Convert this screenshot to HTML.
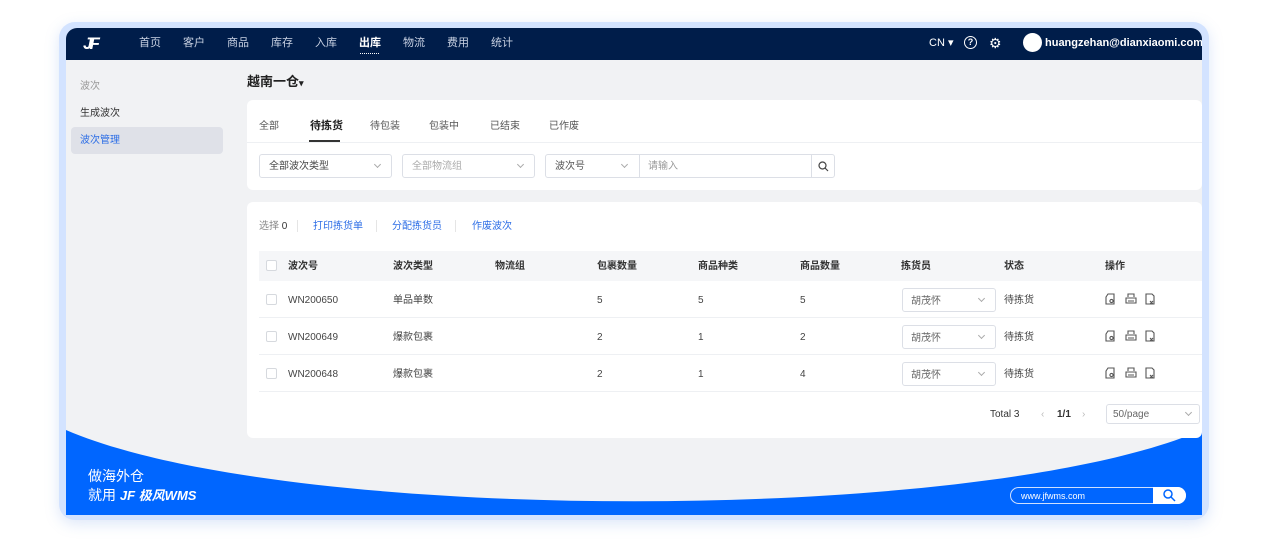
<!DOCTYPE html>
<html><head><meta charset="utf-8"><style>
*{margin:0;padding:0;box-sizing:border-box}
body{width:1266px;height:559px;background:#fff;font-family:"Liberation Sans","Noto Sans CJK SC",sans-serif;position:relative;overflow:hidden;color:#333}
.a{position:absolute;white-space:nowrap;line-height:12px}
#frame{position:absolute;left:59px;top:22px;width:1150px;height:498px;border-radius:16px;background:#d3e3ff;box-shadow:0 4px 14px rgba(120,160,230,.25)}
#inner{position:absolute;left:66px;top:28px;width:1136px;height:487px;background:#f1f2f4;border-radius:11px 11px 0 0;overflow:hidden}
#nav{position:absolute;left:0;top:0;width:1136px;height:32px;background:#001d4a}
.nl{position:absolute;top:9px;font-size:11px;color:#c9d2e3;line-height:12px}
.card{position:absolute;background:#fff;border-radius:6px}
.f{font-size:10px;color:#555}
.sel{position:absolute;border:1px solid #dcdfe6;border-radius:3px;background:#fff;height:24px}
.chev{position:absolute;width:5px;height:5px;border-right:1px solid #aaa;border-bottom:1px solid #aaa;transform:rotate(45deg)}
.cb{position:absolute;width:11px;height:11px;border:1px solid #d6d9de;border-radius:2px;background:#fff}
.th{position:absolute;top:10px;font-size:10px;color:#333;font-weight:bold;line-height:12px}
.td{position:absolute;font-size:10px;color:#444;line-height:12px;top:14px}
.row{position:absolute;left:0;width:943px;height:37px;border-bottom:1px solid #eef0f3}
</style></head><body>
<div id="frame"></div>
<div id="inner">
 <div id="nav">
  <div class="a" style="left:17px;top:7px;font-size:17px;line-height:18px;font-weight:bold;font-style:italic;color:#fff;letter-spacing:-3px">JF</div>
  <div class="nl" style="left:73px">首页</div><div class="nl" style="left:117px">客户</div><div class="nl" style="left:161px">商品</div><div class="nl" style="left:205px">库存</div><div class="nl" style="left:249px">入库</div>
  <div class="nl" style="left:293px;color:#fff;font-weight:bold">出库</div>
  <div class="a" style="left:294px;top:25px;width:19px;height:2px;border-top:1px dotted #fff"></div>
  <div class="nl" style="left:337px">物流</div><div class="nl" style="left:381px">费用</div><div class="nl" style="left:425px">统计</div>
  <div class="a" style="left:863px;top:9px;font-size:11px;color:#fff">CN ▾</div>
  <div class="a" style="left:898px;top:8px;width:13px;height:13px;border:1.5px solid #fff;border-radius:50%;color:#fff;font-size:9px;text-align:center;line-height:10px;font-weight:bold">?</div>
  <div class="a" style="left:923px;top:7px;color:#fff;font-size:14px;line-height:16px">⚙</div>
  <div class="a" style="left:957px;top:5px;width:19px;height:19px;border-radius:50%;background:#fff"></div>
  <div class="a" style="left:979px;top:9px;font-size:11px;color:#fff;font-weight:bold">huangzehan@dianxiaomi.com</div>
 </div>
 <svg class="a" style="left:0;top:0" width="1136" height="487"><path d="M0 402 C220 497 916 497 1136 402 L1136 487 L0 487Z" fill="#0066ff"/></svg>
 <div class="a" style="left:22px;top:440px;font-size:14px;line-height:16px;color:#fff">做海外仓</div>
 <div class="a" style="left:22px;top:459px;font-size:14px;line-height:16px;color:#fff">就用 <i style="font-weight:bold;font-size:13px">JF 极风WMS</i></div>
 <div class="a" style="left:944px;top:459px;width:176px;height:17px;border:1px solid #cfe0ff;border-radius:9px;background:#0066ff"></div>
 <div class="a" style="left:955px;top:462px;font-size:9px;color:#fff">www.jfwms.com</div>
 <div class="a" style="left:1087px;top:459px;width:33px;height:17px;background:#fff;border-radius:0 9px 9px 0"></div>
 <svg class="a" style="left:1097px;top:461px" width="13" height="13"><circle cx="5" cy="5" r="4" stroke="#0066ff" stroke-width="1.5" fill="none"/><path d="M8 8l4 4" stroke="#0066ff" stroke-width="1.5"/></svg>
 <div class="a" style="left:14px;top:53px;font-size:10px;color:#999">波次</div>
 <div class="a" style="left:14px;top:80px;font-size:10px;color:#333">生成波次</div>
 <div class="a" style="left:5px;top:99px;width:152px;height:27px;background:#dfe1e8;border-radius:4px"></div>
 <div class="a" style="left:14px;top:107px;font-size:10px;color:#2d6ee6">波次管理</div>
 <div class="a" style="left:181px;top:47px;font-size:13px;line-height:14px;font-weight:bold;color:#222">越南一仓<span style="font-size:9px">▾</span></div>
 <div class="card" style="left:181px;top:72px;width:955px;height:90px">
  <div class="a f" style="left:12px;top:21px">全部</div>
  <div class="a" style="left:63px;top:20px;font-size:11px;font-weight:bold;color:#222">待拣货</div>
  <div class="a" style="left:62px;top:40px;width:31px;height:2px;background:#333"></div>
  <div class="a f" style="left:123px;top:21px">待包装</div>
  <div class="a f" style="left:182px;top:21px">包装中</div>
  <div class="a f" style="left:243px;top:21px">已结束</div>
  <div class="a f" style="left:302px;top:21px">已作废</div>
  <div class="a" style="left:0;top:42px;width:955px;height:1px;background:#eef0f3"></div>
  <div class="sel" style="left:12px;top:54px;width:133px"><span class="a f" style="left:9px;top:6px;color:#444">全部波次类型</span><span class="chev" style="left:115px;top:7px"></span></div>
  <div class="sel" style="left:155px;top:54px;width:133px"><span class="a f" style="left:9px;top:6px;color:#aaa">全部物流组</span><span class="chev" style="left:115px;top:7px"></span></div>
  <div class="sel" style="left:298px;top:54px;width:290px"><span class="a f" style="left:9px;top:6px;color:#555">波次号</span><span class="chev" style="left:76px;top:7px"></span>
   <span class="a" style="left:93px;top:0;width:1px;height:22px;background:#dcdfe6"></span><span class="a f" style="left:102px;top:6px;color:#999">请输入</span>
   <span class="a" style="left:265px;top:0;width:1px;height:22px;background:#dcdfe6"></span>
   <svg class="a" style="left:272px;top:6px" width="11" height="11"><circle cx="4.5" cy="4.5" r="3.5" stroke="#444" stroke-width="1.2" fill="none"/><path d="M7 7l3 3" stroke="#444" stroke-width="1.2"/></svg></div>
 </div>
 <div class="card" style="left:181px;top:174px;width:955px;height:236px">
  <div class="a f" style="left:12px;top:19px;color:#888">选择 <span style="color:#333">0</span></div>
  <div class="a" style="left:50px;top:18px;width:1px;height:12px;background:#e5e5e5"></div>
  <div class="a f" style="left:66px;top:19px;color:#2d6ee6">打印拣货单</div>
  <div class="a" style="left:129px;top:18px;width:1px;height:12px;background:#e5e5e5"></div>
  <div class="a f" style="left:145px;top:19px;color:#2d6ee6">分配拣货员</div>
  <div class="a" style="left:208px;top:18px;width:1px;height:12px;background:#e5e5e5"></div>
  <div class="a f" style="left:225px;top:19px;color:#2d6ee6">作废波次</div>
  <div class="a" style="left:12px;top:49px;width:943px;height:30px;background:#f5f6f8">
   <div class="cb" style="left:7px;top:9px"></div>
   <div class="th" style="left:29px">波次号</div><div class="th" style="left:134px">波次类型</div><div class="th" style="left:236px">物流组</div><div class="th" style="left:338px">包裹数量</div><div class="th" style="left:439px">商品种类</div><div class="th" style="left:541px">商品数量</div><div class="th" style="left:642px">拣货员</div><div class="th" style="left:745px">状态</div><div class="th" style="left:846px">操作</div>
  </div>
  <div class="a" style="left:12px;top:79px;width:943px;height:111px">
   <div class="row" style="top:0">
    <div class="cb" style="left:7px;top:13px"></div><div class="td" style="left:29px">WN200650</div><div class="td" style="left:134px">单品单数</div><div class="td" style="left:338px">5</div><div class="td" style="left:439px">5</div><div class="td" style="left:541px">5</div>
    <div class="sel" style="left:643px;top:7px;width:94px"><span class="a f" style="left:8px;top:7px;color:#666">胡茂怀</span><span class="chev" style="left:76px;top:7px"></span></div>
    <div class="td" style="left:745px">待拣货</div>
    <svg class="a" style="left:846px;top:12px" width="60" height="13"><g fill="none" stroke="#555" stroke-width="1.1"><path d="M3 1h6v10H1V4z"/><circle cx="6.5" cy="8" r="1.6"/><path d="M23 4V1h6v3M21 5h10v5H21zM23 8h6"/><path d="M41 1h6l2 2v8h-8zM45 8l3 3M48 8l-3 3"/></g></svg>
   </div>
   <div class="row" style="top:37px">
    <div class="cb" style="left:7px;top:13px"></div><div class="td" style="left:29px">WN200649</div><div class="td" style="left:134px">爆款包裹</div><div class="td" style="left:338px">2</div><div class="td" style="left:439px">1</div><div class="td" style="left:541px">2</div>
    <div class="sel" style="left:643px;top:7px;width:94px"><span class="a f" style="left:8px;top:7px;color:#666">胡茂怀</span><span class="chev" style="left:76px;top:7px"></span></div>
    <div class="td" style="left:745px">待拣货</div>
    <svg class="a" style="left:846px;top:12px" width="60" height="13"><g fill="none" stroke="#555" stroke-width="1.1"><path d="M3 1h6v10H1V4z"/><circle cx="6.5" cy="8" r="1.6"/><path d="M23 4V1h6v3M21 5h10v5H21zM23 8h6"/><path d="M41 1h6l2 2v8h-8zM45 8l3 3M48 8l-3 3"/></g></svg>
   </div>
   <div class="row" style="top:74px">
    <div class="cb" style="left:7px;top:13px"></div><div class="td" style="left:29px">WN200648</div><div class="td" style="left:134px">爆款包裹</div><div class="td" style="left:338px">2</div><div class="td" style="left:439px">1</div><div class="td" style="left:541px">4</div>
    <div class="sel" style="left:643px;top:7px;width:94px"><span class="a f" style="left:8px;top:7px;color:#666">胡茂怀</span><span class="chev" style="left:76px;top:7px"></span></div>
    <div class="td" style="left:745px">待拣货</div>
    <svg class="a" style="left:846px;top:12px" width="60" height="13"><g fill="none" stroke="#555" stroke-width="1.1"><path d="M3 1h6v10H1V4z"/><circle cx="6.5" cy="8" r="1.6"/><path d="M23 4V1h6v3M21 5h10v5H21zM23 8h6"/><path d="M41 1h6l2 2v8h-8zM45 8l3 3M48 8l-3 3"/></g></svg>
   </div>
  </div>
  <div class="a f" style="left:743px;top:207px;color:#333">Total 3</div>
  <div class="a f" style="left:794px;top:207px;color:#bbb">‹</div>
  <div class="a f" style="left:810px;top:207px;color:#333;font-weight:bold">1/1</div>
  <div class="a f" style="left:835px;top:207px;color:#bbb">›</div>
  <div class="sel" style="left:859px;top:202px;width:94px;height:20px"><span class="a f" style="left:6px;top:4px;color:#666">50/page</span><span class="chev" style="left:79px;top:5px"></span></div>
 </div>
</div>
</body></html>
